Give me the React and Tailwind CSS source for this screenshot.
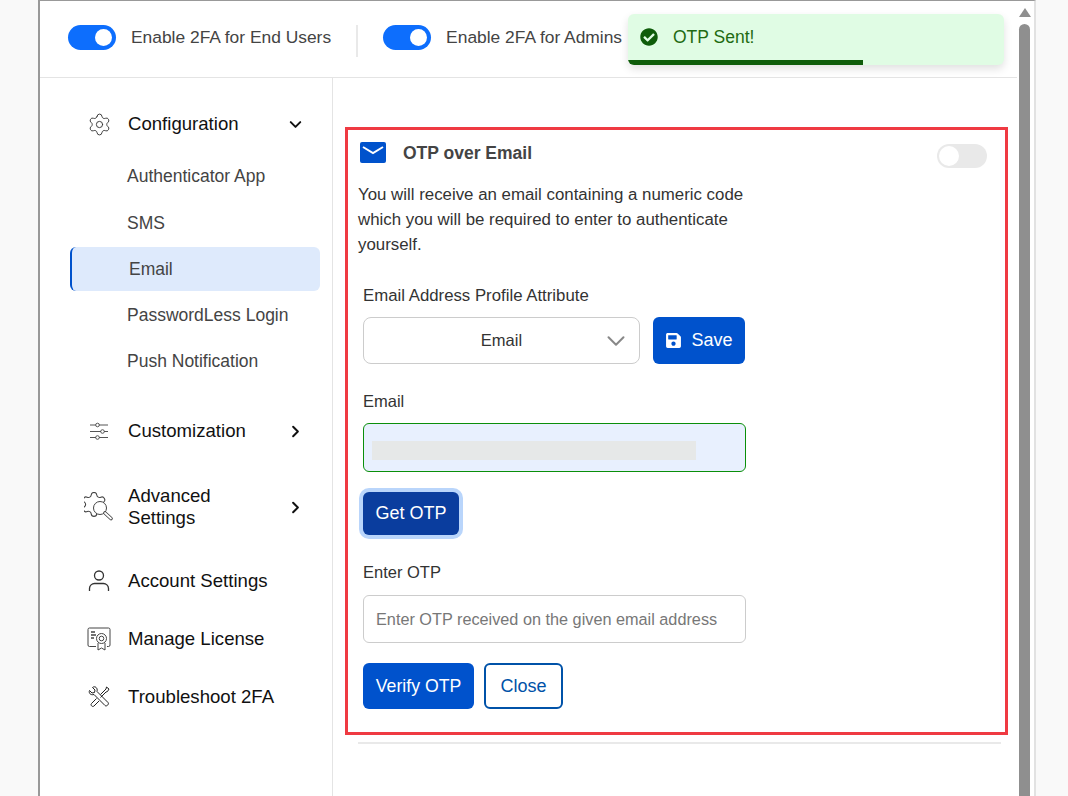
import React from 'react';
import { ChevronDown, ChevronRight, Settings } from 'lucide-react';
import { FaCheckCircle, FaSave } from 'react-icons/fa';

const gearPath =
  'M9.671 4.136a2.34 2.34 0 0 1 4.659 0 2.34 2.34 0 0 0 3.319 1.915 2.34 2.34 0 0 1 2.33 4.033 2.34 2.34 0 0 0 0 3.831 2.34 2.34 0 0 1-2.33 4.033 2.34 2.34 0 0 0-3.319 1.915 2.34 2.34 0 0 1-4.659 0 2.34 2.34 0 0 0-3.32-1.915 2.34 2.34 0 0 1-2.33-4.033 2.34 2.34 0 0 0 0-3.831A2.34 2.34 0 0 1 6.35 6.051a2.34 2.34 0 0 0 3.32-1.915';

function Toggle({ on }) {
  if (on) {
    return (
      <span className="flex h-[25px] w-[48px] items-center justify-end rounded-full bg-[#0d6efd] pr-[4px]">
        <span className="h-[17px] w-[17px] rounded-full bg-white" />
      </span>
    );
  }
  return (
    <span className="flex h-[24px] w-[50px] items-center rounded-full bg-[#e9e9e9] pl-[2px]">
      <span className="h-[20px] w-[20px] rounded-full bg-white" />
    </span>
  );
}

function SlidersIcon() {
  return (
    <svg width="20" height="20" viewBox="0 0 20 20" fill="none" stroke="#555" strokeWidth="1">
      <path d="M1 4h6M10 4h9M1 10.500h11M15 10.500h4M1 16.500h6M10 16.500h9" />
      <circle cx="8.500" cy="4" r="1.800" />
      <circle cx="13.500" cy="10.500" r="1.800" />
      <circle cx="8.500" cy="16.500" r="1.800" />
    </svg>
  );
}

function AdvancedIcon() {
  return (
    <svg width="30" height="30" viewBox="1 0 30 30" fill="none" stroke="#444" strokeWidth="1">
      <g transform="translate(-3.400 -2) scale(1.200)">
        <path d={gearPath} strokeWidth="0.900" />
      </g>
      <circle cx="17" cy="16" r="6.500" fill="#fff" />
      <path d="M22 21l6 5.500" stroke="#444" strokeWidth="3.600" strokeLinecap="round" />
      <path d="M22 21l6 5.500" stroke="#fff" strokeWidth="1.800" strokeLinecap="round" />
    </svg>
  );
}

function UserIcon() {
  return (
    <svg width="22" height="24" viewBox="0 0 22 24" fill="none" stroke="#333" strokeWidth="1.300">
      <circle cx="11" cy="6.500" r="4.500" />
      <path d="M1.500 22v-2.500c0-3 2.500-5 5-5h9c2.500 0 5 2 5 5V22" />
    </svg>
  );
}

function LicenseIcon() {
  return (
    <svg width="24" height="24" viewBox="0 0 24 24" fill="none" stroke="#444" strokeWidth="1">
      <path d="M9 19.500H2.500a1.500 1.500 0 0 1-1.500-1.500V2.500A1.500 1.500 0 0 1 2.500 1h19A1.500 1.500 0 0 1 23 2.500V18a1.500 1.500 0 0 1-1.500 1.500H20" />
      <path d="M4 5h4M4 8h5M4 11h3" strokeWidth="1.300" />
      <circle cx="14.500" cy="11.500" r="5" />
      <circle cx="14.500" cy="11.500" r="2.300" />
      <path d="M11 16v7l3.500-2 3.500 2v-7" />
    </svg>
  );
}

function ToolsIcon() {
  return (
    <svg width="22" height="22" viewBox="0 0 22 22" fill="none" stroke="#222" strokeWidth="1" strokeLinejoin="round">
      <path d="M1.500 4.500L4 7l2.500-.5L7 4 4.500 1.500C7-.5 10 2 9 5.500l11 11c1.500 1.500-1.500 4.500-3 3l-11-11C2.500 9.500.5 7 1.500 4.500z" />
      <path d="M12.500 8.500L18 3l.5-2 2.500 2-1.500 2.500-1.500.5-5.500 5.500" />
      <path d="M8.500 12.500l-5 5c-1.500 1.500 1 4 2.500 2.500l5-5" />
    </svg>
  );
}

function NavRow({ icon, label, chevron, className }) {
  return (
    <div className={`flex items-center text-[18.600px] leading-[22px] text-[#111] ${className}`}>
      <span className="flex w-[58px] shrink-0 justify-center">{icon}</span>
      <span className="w-[150px] shrink-0 whitespace-pre-line">{label}</span>
      {chevron === 'down' && <ChevronDown size={19} strokeWidth={2.5} className="ml-[8px] text-[#111]" />}
      {chevron === 'right' && <ChevronRight size={19} strokeWidth={2.5} className="ml-[8px] text-[#111]" />}
    </div>
  );
}

function SubItem({ label, className = '' }) {
  return <div className={`flex h-[46px] items-center pl-[57px] text-[17.500px] text-[#444] ${className}`}>{label}</div>;
}

export default function App() {
  return (
    <div className="relative flex h-[796px] w-[1068px] overflow-hidden bg-[#f9f9f9] font-['Liberation_Sans',Arial,sans-serif]">
      {/* panel */}
      <div className="ml-[38px] flex h-full w-[998px] shrink-0 border-t border-r-2 border-l-2 border-t-[#999] border-r-[#e2e2e2] border-l-[#999] bg-white">
        <div className="flex w-[977px] shrink-0 flex-col">
          {/* top bar */}
          <header className="flex h-[77px] shrink-0 items-center border-b border-[#e4e4e4] pb-[3px] pl-[28px] text-[17.400px] text-[#444]">
            <Toggle on />
            <span className="ml-[15px]">Enable 2FA for End Users</span>
            <span className="mx-[25px] mt-[7px] h-[32px] w-[2px] bg-[#e9e9e9]" />
            <Toggle on />
            <span className="ml-[15px]">Enable 2FA for Admins</span>
          </header>

          <div className="flex min-h-0 flex-1">
            {/* sidebar */}
            <nav className="w-[293px] shrink-0 border-r border-[#e4e4e4] pt-[23px] pl-[30px]">
              <NavRow className="h-[46px]" label="Configuration" chevron="down" icon={<Settings size={25} strokeWidth={0.9} className="text-[#333]" />} />
              <div className="mt-[6px] w-[250px]">
                <SubItem label="Authenticator App" />
                <SubItem label="SMS" className="mt-[1px]" />
                <div className="mt-[1px] flex h-[44px] items-center rounded-[6px] border-l-2 border-[#0052cc] bg-[#deeafc] pl-[57px] text-[17.500px] text-[#444]">Email</div>
                <div className="h-[1px]" />
                <SubItem label="PasswordLess Login" />
                <SubItem label="Push Notification" />
              </div>
              <NavRow className="mt-[24px] h-[46px]" label="Customization" chevron="right" icon={<SlidersIcon />} />
              <NavRow className="mt-[25px] h-[56px]" label={'Advanced\nSettings'} chevron="right" icon={<AdvancedIcon />} />
              <NavRow className="mt-[23px] h-[46px]" label="Account Settings" icon={<UserIcon />} />
              <NavRow className="mt-[12px] h-[46px]" label="Manage License" icon={<LicenseIcon />} />
              <NavRow className="mt-[12px] h-[46px]" label="Troubleshoot 2FA" icon={<ToolsIcon />} />
            </nav>

            {/* main */}
            <main className="min-w-0 flex-1 pt-[49px] pl-[12px] text-[#333]">
              <section className="h-[608px] w-[663px] border-[3px] border-[#ef3a42] pt-[9px] pr-[18px] pl-[10px]">
                <div className="flex h-[28px] items-center">
                  <svg width="26" height="21" viewBox="0 0 26 21" className="mb-[2px] ml-[2px]">
                    <rect width="26" height="21" rx="2" fill="#0052cc" />
                    <path d="M3 5l10 6 10-6" fill="none" stroke="#fff" strokeWidth="2" />
                  </svg>
                  <h2 className="ml-[17px] text-[17.500px] font-bold text-[#444]">OTP over Email</h2>
                  <span className="mt-[6px] ml-auto"><Toggle /></span>
                </div>
                <p className="mt-[15px] w-[400px] text-[16.850px] leading-[25px] text-[#333]">
                  You will receive an email containing a numeric code which you will be required to enter to authenticate yourself.
                </p>

                <div className="ml-[5px] w-[383px]">
                  <label className="mt-[26px] block text-[16.800px] leading-[25px]">Email Address Profile Attribute</label>
                  <div className="mt-[9px] flex gap-[13px]">
                    <div className="relative flex h-[47px] w-[277px] items-center justify-center rounded-[8px] border border-[#ccc] text-[16.500px]">
                      Email
                      <ChevronDown size={30} strokeWidth={1.6} className="absolute right-[8px] text-[#888]" />
                    </div>
                    <button className="flex h-[47px] w-[92px] items-center justify-center gap-[9px] rounded-[6px] bg-[#0052cc] text-[18px] text-white">
                      <FaSave size={17} />
                      Save
                    </button>
                  </div>

                  <label className="mt-[25px] block text-[16.500px] leading-[25px]">Email</label>
                  <div className="mt-[9px] flex h-[49px] items-center rounded-[6px] border border-[#0a8f0a] bg-[#e8f0fe] pl-[8px]">
                    <span className="mt-[6px] h-[19px] w-[324px] bg-[#e6e8e8]" />
                  </div>

                  <button className="mt-[20px] h-[43px] w-[96px] rounded-[6px] bg-[#0a3d9e] text-[18px] text-white ring-4 ring-[#b9d5fb]">Get OTP</button>

                  <label className="mt-[25px] block text-[16.500px] leading-[25px]">Enter OTP</label>
                  <input
                    readOnly
                    placeholder="Enter OTP received on the given email address"
                    className="mt-[10px] block h-[48px] w-full rounded-[6px] border border-[#ccc] px-[12px] text-[16.250px] placeholder:text-[#777]"
                  />

                  <div className="mt-[20px] flex gap-[10px]">
                    <button className="h-[46px] w-[111px] rounded-[6px] bg-[#0052cc] text-[17.700px] text-white">Verify OTP</button>
                    <button className="h-[46px] w-[79px] rounded-[6px] border-2 border-[#0052a8] text-[18px] text-[#0052a8]">Close</button>
                  </div>
                </div>
              </section>
              <div className="mt-[7px] ml-[13px] h-[2px] w-[643px] bg-[#e9e9e9]" />
            </main>
          </div>
        </div>

        {/* scrollbar */}
        <div className="flex flex-1 flex-col items-center pt-[7px] pr-[2px]">
          <svg width="12" height="9" viewBox="0 0 12 9"><path d="M6 0l6 9H0z" fill="#8f8f8f" /></svg>
          <div className="mt-[7px] w-[11px] flex-1 rounded-t-full bg-[#8f8f8f]" />
        </div>
      </div>

      {/* toast */}
      <div className="absolute top-[14px] left-[628px] flex h-[51px] w-[376px] flex-col justify-between overflow-hidden rounded-[6px] bg-[#e0fce4] shadow-[0_4px_8px_rgba(0,0,0,0.12)]">
        <div className="flex h-[46px] items-center pl-[12px] text-[17.500px] text-[#1f6b12]">
          <FaCheckCircle size={18} className="text-[#0f5c0a]" />
          <span className="ml-[15px]">OTP Sent!</span>
        </div>
        <div className="h-[5px] w-[235px] bg-[#0f5c0a]" />
      </div>
    </div>
  );
}
